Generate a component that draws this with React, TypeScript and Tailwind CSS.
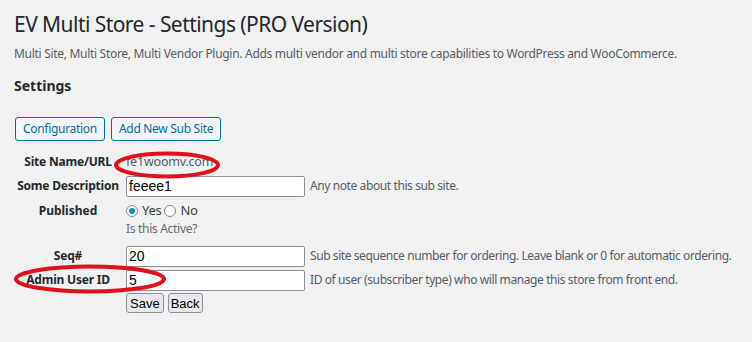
import React from "react";

const font = { fontFamily: '"Noto Sans", "Open Sans", sans-serif' };
const inputFont = { fontFamily: '"Liberation Sans", Arial, sans-serif' };

function Row({ label, children, className = "" }: { label: string; children?: React.ReactNode; className?: string }) {
  return (
    <div className={"flex items-center " + className}>
      <div className="w-[108px] text-center text-[12px] font-bold text-[#23282d] tracking-[-0.2px]">{label}</div>
      <div className="flex items-center pl-[4px]">{children}</div>
    </div>
  );
}

function TextInput({ value }: { value: string }) {
  return (
    <div className="w-[179px] h-[21px] border border-[#8d8d99] rounded-[2px] bg-white flex items-center pl-[2px] text-[14px] text-black leading-none" style={inputFont}>
      {value}
    </div>
  );
}

export default function App() {
  return (
    <div className="relative w-[752px] h-[342px] bg-[#f1f1f1] overflow-hidden text-[#23282d]" style={font}>
      <div className="pl-[14px] pt-[8px]">
        <h1 className="text-[21px] leading-[32px] font-normal text-[#23282d] tracking-[-0.55px]">EV Multi Store - Settings (PRO Version)</h1>
        <p className="mt-[5px] text-[12px] leading-[18px] text-[#555d66] tracking-[-0.3px]">
          Multi Site, Multi Store, Multi Vendor Plugin. Adds multi vendor and multi store capabilities to WordPress and WooCommerce.
        </p>
        <h2 className="mt-[13px] text-[14px] leading-[20px] font-bold text-[#23282d]">Settings</h2>
        <div className="mt-[21px] flex gap-[6px] pl-[1px]">
          <button className="h-[24px] px-[7px] border border-[#0071a1] rounded-[3px] bg-[#f3f5f6] text-[12px] text-[#0071a1] leading-none tracking-[-0.3px]">Configuration</button>
          <button className="h-[24px] px-[7px] border border-[#0071a1] rounded-[3px] bg-[#f3f5f6] text-[12px] text-[#0071a1] leading-none tracking-[-0.3px]">Add New Sub Site</button>
        </div>
      </div>
      <div className="absolute left-[14px] top-[150px] flex flex-col">
        <Row label="Site Name/URL" className="h-[24px]">
          <span className="text-[12.5px] text-[#555d66] tracking-[-0.2px]">fe1woomv.com</span>
        </Row>
        <Row label="Some Description" className="h-[24px]">
          <TextInput value="feeee1" />
          <span className="ml-[5px] text-[12px] text-[#555d66] tracking-[-0.4px]">Any note about this sub site.</span>
        </Row>
        <div className="flex h-[46px]">
          <div className="w-[108px] text-center text-[12px] font-bold text-[#23282d] pt-[4px] leading-[18px]">Published</div>
          <div className="pl-[4px] pt-[4px]">
            <div className="flex items-center h-[18px] text-[13px] text-[#3c434a] tracking-[-0.3px]">
              <span className="w-[12px] h-[12px] rounded-full border border-[#7e8993] bg-white flex items-center justify-center">
                <span className="w-[6px] h-[6px] rounded-full bg-[#1e8cbe]" />
              </span>
              <span className="ml-[4px]">Yes</span>
              <span className="ml-[3px] w-[12px] h-[12px] rounded-full border border-[#7e8993] bg-white" />
              <span className="ml-[4px]">No</span>
            </div>
            <div className="text-[12px] leading-[16px] mt-[1px] text-[#646970] tracking-[-0.3px]">Is this Active?</div>
          </div>
        </div>
        <Row label="Seq#" className="h-[24px]">
          <TextInput value="20" />
          <span className="ml-[5px] text-[12px] text-[#555d66] tracking-[-0.42px]">Sub site sequence number for ordering. Leave blank or 0 for automatic ordering.</span>
        </Row>
        <Row label="Admin User ID" className="h-[24px]">
          <TextInput value="5" />
          <span className="ml-[5px] text-[12px] text-[#555d66] tracking-[-0.4px]">ID of user (subscriber type) who will manage this store from front end.</span>
        </Row>
        <div className="flex pl-[112px] gap-[4px] mt-[1px]">
          <button className="h-[20px] px-[3px] border border-[#8d8d99] rounded-[3px] bg-[#e9e9ed] text-[13px] text-black leading-none" style={inputFont}>Save</button>
          <button className="h-[20px] px-[2px] border border-[#8d8d99] rounded-[3px] bg-[#e9e9ed] text-[13px] text-black leading-none" style={inputFont}>Back</button>
        </div>
      </div>
      <svg className="absolute left-0 top-0 pointer-events-none" width="752" height="342">
        <ellipse cx="167" cy="165" rx="51" ry="11.5" fill="none" stroke="#e3101a" strokeWidth="4" />
        <ellipse cx="90" cy="279" rx="74" ry="12.5" fill="none" stroke="#e3101a" strokeWidth="4" />
      </svg>
    </div>
  );
}
